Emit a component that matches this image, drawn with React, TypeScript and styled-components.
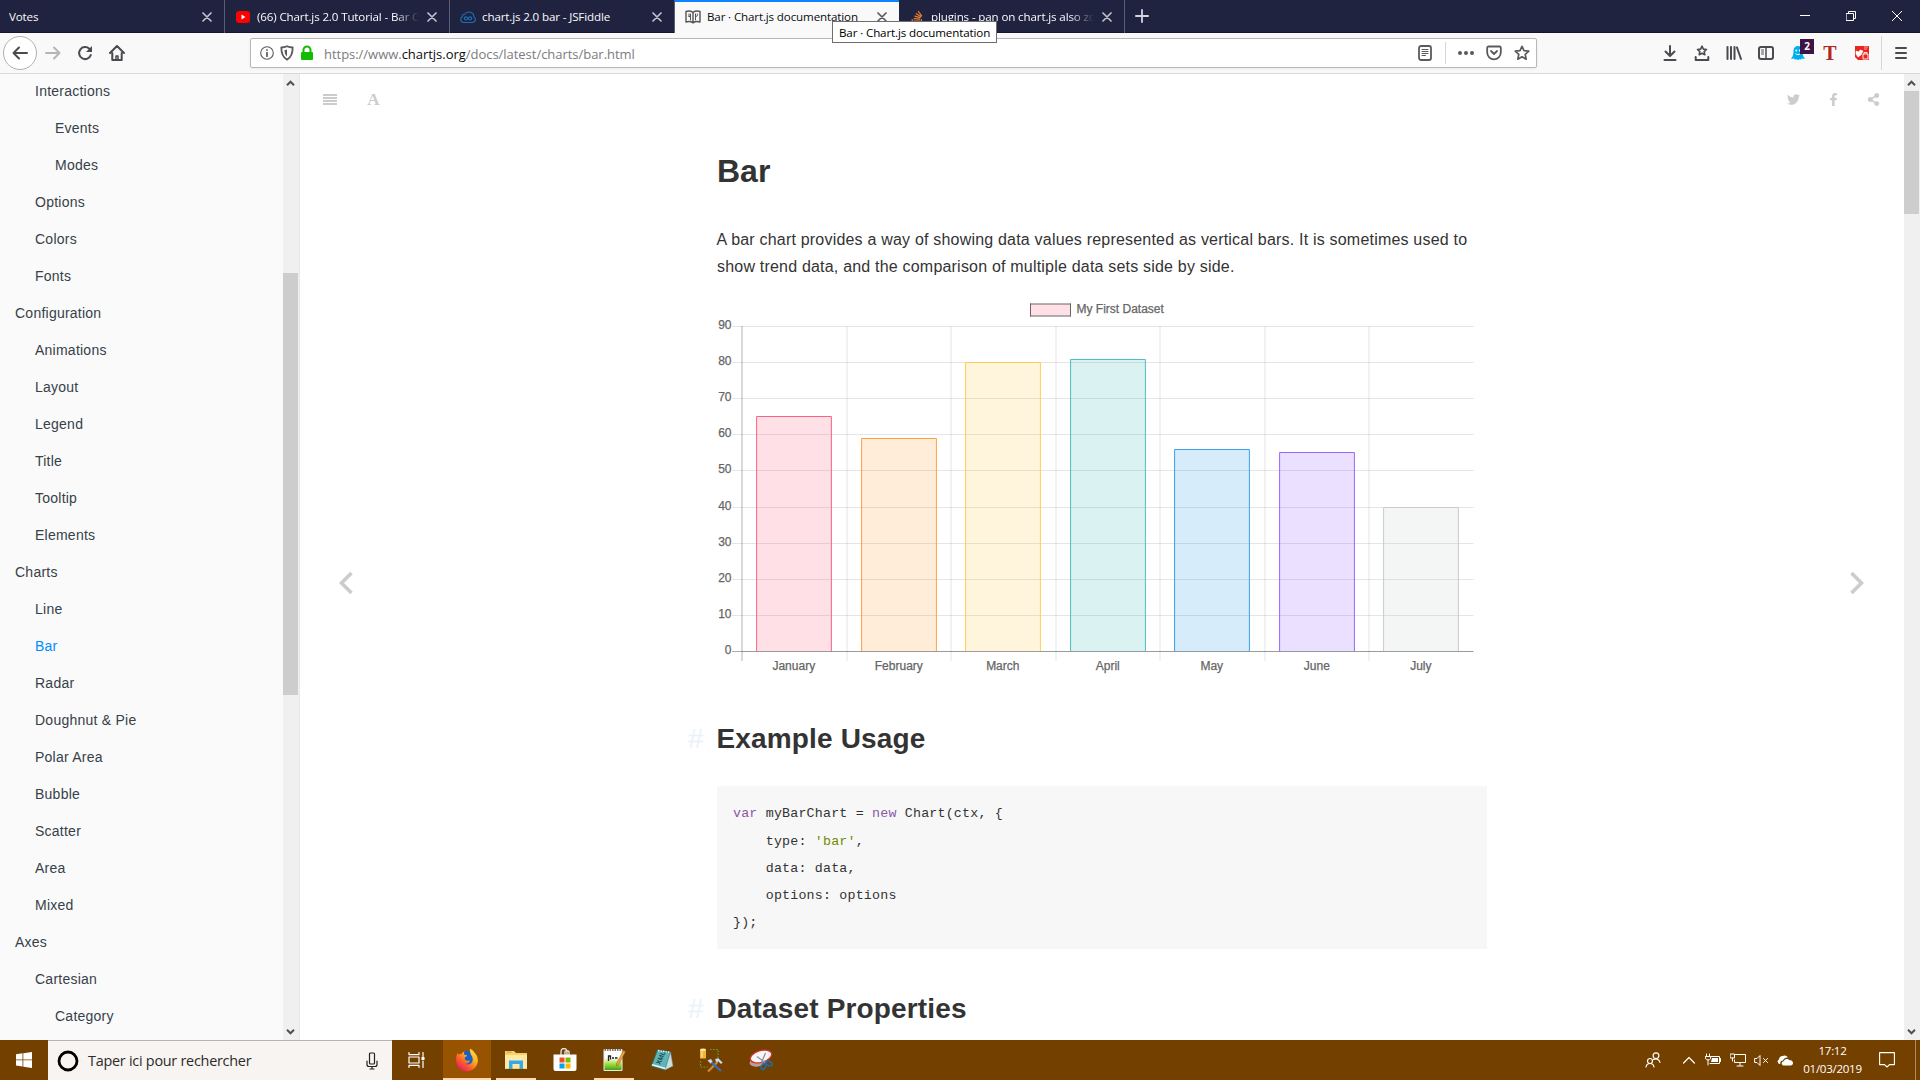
import React from "react";
import styled, { createGlobalStyle, css } from "styled-components";
import { FaTwitter, FaFacebookF, FaShareAlt } from "react-icons/fa";

const ui = `"Open Sans", "Noto Sans", sans-serif`;
const arial = `"Liberation Sans", Arial, sans-serif`;

const GlobalStyle = createGlobalStyle`
  *, *::before, *::after { box-sizing: border-box; }
  html, body { margin: 0; padding: 0; overflow: hidden; background: #fff; }
  svg { display: block; flex: none; }
`;

const Screen = styled.div`
  width: 1920px;
  height: 1080px;
  display: flex;
  flex-direction: column;
  overflow: hidden;
  font-family: ${ui};
`;

/* ---------- tab strip ---------- */
const TabStrip = styled.div`
  flex: none;
  height: 33px;
  display: flex;
  background: #202340;
  border-bottom: 1px solid #14162c;
`;

const Tab = styled.div<{ $active?: boolean }>`
  width: 225px;
  height: 33px;
  flex: none;
  display: flex;
  align-items: center;
  padding: 1px 10px 0 9px;
  color: #f9f9fa;
  border-right: 1px solid #5c5e75;
  ${(p) =>
    p.$active &&
    css`
      width: 224px;
      background: #f9f9fa;
      color: #0c0c0d;
      border-right: 0;
      border-top: 2px solid #0a84ff;
      padding: 0 10px 1px 9px;

      & + & {
        padding-left: 10px;
      }
    `}
`;

const Favicon = styled.span`
  width: 16px;
  margin-right: 6px;
  flex: none;
`;

const TabTitle = styled.span<{ $fade?: boolean }>`
  flex: 1;
  overflow: hidden;
  white-space: nowrap;
  font-size: 11.6px;
  line-height: 18px;
  letter-spacing: -0.14px;
  ${(p) =>
    p.$fade &&
    css`
      mask-image: linear-gradient(to right, #000 calc(100% - 24px), transparent);
    `}
`;

const CloseSlot = styled.span`
  flex: none;
  margin-left: 6px;
  padding: 0 2px;
`;

const NewTab = styled.div`
  width: 33px;
  display: flex;
  align-items: center;
  justify-content: center;
`;

const WindowControls = styled.div`
  margin-left: auto;
  display: flex;
  align-items: center;
`;

const WindowButton = styled.div`
  width: 46px;
  display: flex;
  justify-content: center;
`;

const Tooltip = styled.div`
  position: absolute;
  left: 832px;
  top: 21px;
  width: 165px;
  height: 22px;
  border: 1px solid #6e6e6e;
  background: #fff;
  color: #000;
  font-size: 11.6px;
  line-height: 21px;
  letter-spacing: -0.13px;
  padding-left: 6px;
  white-space: nowrap;
`;

/* ---------- toolbar ---------- */
const Toolbar = styled.div`
  flex: none;
  height: 41px;
  display: flex;
  align-items: center;
  background: #f9f9fa;
  border-bottom: 1px solid #d9d9d9;
`;

const NavGroup = styled.div`
  width: 250px;
  display: flex;
  align-items: center;
  padding-left: 3px;
`;

const BackButton = styled.div`
  width: 34px;
  height: 34px;
  border-radius: 50%;
  border: 1px solid #b1b1b3;
  background: #fff;
  display: flex;
  align-items: center;
  justify-content: center;
`;

const NavButton = styled.div`
  width: 32px;
  display: flex;
  justify-content: center;
`;

const UrlBar = styled.div`
  width: 1287px;
  height: 30px;
  display: flex;
  align-items: center;
  background: #fff;
  border: 1px solid #b8b8b8;
  border-radius: 2px;
  box-shadow: 0 1px 3px rgba(0, 0, 0, 0.06);
  padding-left: 6px;
`;

const UrlText = styled.span`
  flex: 1;
  padding: 1px 0 0 7px;
  font-size: 13px;
  letter-spacing: -0.03px;
  color: #7b7b7e;
  white-space: nowrap;
`;

const UrlHost = styled.span`
  color: #0c0c0d;
`;

const Slot = styled.div<{ $w: number }>`
  width: ${(p) => p.$w}px;
  flex: none;
  display: flex;
  justify-content: center;
  align-items: center;
`;

const VRule = styled.div<{ $h: number }>`
  width: 1px;
  height: ${(p) => p.$h}px;
  background: #d7d7db;
`;

const Extensions = styled.div`
  flex: 1;
  display: flex;
  align-items: center;
  padding-left: 117px;
`;

const GhostWrap = styled.div`
  position: relative;
`;

const Badge = styled.span`
  position: absolute;
  left: 10px;
  top: -6px;
  width: 14px;
  height: 15px;
  background: #3f1444;
  color: #fff;
  font: bold 10px/15px ${ui};
  text-align: center;
`;

const LetterT = styled.span`
  font: bold 20px/20px "Liberation Serif", serif;
  color: #b3261a;
`;

/* ---------- page ---------- */
const Page = styled.div`
  flex: 1;
  min-height: 0;
  display: flex;
  background: #fff;
`;

const Sidebar = styled.nav`
  width: 300px;
  flex: none;
  display: flex;
  background: #fafafa;
  border-right: 1px solid #e7e7e7;
`;

const Summary = styled.ul`
  list-style: none;
  margin: -1px 0 0;
  padding: 0;
  width: 283px;
  flex: none;
`;

const SummaryItem = styled.li<{ $level: number; $active?: boolean }>`
  height: 37px;
  padding-left: ${(p) => 15 + p.$level * 20}px;
  font: 14px/37px ${arial};
  letter-spacing: 0.24px;
  color: ${(p) => (p.$active ? "#008cff" : "#364149")};
`;

const Scrollbar = styled.div`
  width: 16px;
  flex: none;
  background: #f0f0f0;
  display: flex;
  flex-direction: column;
`;

const ScrollArrow = styled.div`
  height: 17px;
  flex: none;
  display: flex;
  align-items: center;
  justify-content: center;
  padding-right: 1px;
`;

const ScrollThumb = styled.div<{ $offset: number; $h: number }>`
  margin-top: ${(p) => p.$offset}px;
  height: ${(p) => p.$h}px;
  width: 15px;
  background: #cdcdcd;
`;

const Spacer = styled.div`
  flex: 1;
`;

const Gap = styled.div<{ $w: number }>`
  flex: none;
  width: ${(p) => p.$w}px;
`;

const Book = styled.main`
  flex: 1;
  min-width: 0;
  display: flex;
  flex-direction: column;
  overflow: hidden;
`;

const BookHeader = styled.header`
  flex: none;
  height: 50px;
  display: flex;
  align-items: center;
  color: #ccc;
  padding: 0 10.5px 0 10px;
`;

const FontGlyph = styled.span`
  font: bold 17px/20px "Liberation Serif", serif;
  padding-top: 1px;
`;

const BookBody = styled.div`
  flex: 1;
  min-height: 0;
  display: flex;
`;

const PageTurn = styled.div<{ $right?: boolean }>`
  width: 91px;
  flex: none;
  display: flex;
  justify-content: center;
  padding: 447px ${(p) => (p.$right ? 3 : 0)}px 0 0;
`;

const ArticleColumn = styled.div`
  flex: 1;
  display: flex;
  justify-content: center;
`;

const Article = styled.article`
  width: 770px;
  font-family: ${arial};
  color: #333;
  letter-spacing: 0.2px;
`;

const H1 = styled.h1`
  margin: 26px 0 0;
  font-size: 32px;
  line-height: 42px;
  letter-spacing: 0;
`;

const Paragraph = styled.p`
  margin: 34px 0 0;
  font-size: 16px;
  line-height: 27.2px;
  text-indent: -0.5px;
`;

const H2 = styled.h2`
  display: flex;
  height: 36px;
  margin: 0 0 0 -29px;
  font-size: 28px;
  line-height: 36px;
  letter-spacing: 0.15px;
`;

const Hash = styled.span`
  width: 28.5px;
  font-weight: 400;
  color: #e9f1fb;
`;

const CodeBlock = styled.pre`
  margin: 29px 0 42px;
  height: 163px;
  background: #f7f7f7;
  padding: 14px 16px;
  font: 13.3px/27.2px "Liberation Mono", monospace;
  letter-spacing: 0.2px;
  color: #333;
`;

const CodeLine = styled.div`
  height: 27.2px;
`;

const Keyword = styled.span`
  color: #8959a8;
`;

const Str = styled.span`
  color: #718c00;
`;

const ChartSvg = styled.svg`
  margin: 10px 0 31px -17px;
  letter-spacing: 0;
  font: 12px ${arial};

  text {
    fill: #666;
    stroke: #666;
    stroke-width: 0.25px;
  }
`;

/* ---------- taskbar ---------- */
const Taskbar = styled.div`
  flex: none;
  height: 40px;
  display: flex;
  background: #744000;
`;

const TaskButton = styled.div<{ $w: number; $active?: boolean; $open?: boolean }>`
  width: ${(p) => p.$w}px;
  height: 40px;
  flex: none;
  display: flex;
  align-items: center;
  justify-content: center;
  background: ${(p) => (p.$active ? "#985300" : "transparent")};
  border-bottom: ${(p) => (p.$active || p.$open ? "2px solid #ffd9b0" : "0")};
  padding-top: ${(p) => (p.$active || p.$open ? "2px" : "0")};
  margin: 0 ${(p) => (p.$open ? 4 : 0)}px;
`;

const SearchBox = styled.div`
  width: 344px;
  flex: none;
  display: flex;
  align-items: center;
  background: #f8f4f1;
  border-top: 1px solid #b9b4b0;
  padding: 0 13px 0 9px;
`;

const SearchText = styled.span`
  flex: 1;
  padding-left: 9px;
  font-size: 14.4px;
  letter-spacing: -0.25px;
  color: #2b2b2b;
  white-space: nowrap;
`;

const Tray = styled.div`
  margin-left: auto;
  display: flex;
  align-items: center;
`;

const Clock = styled.div`
  width: 61px;
  text-align: center;
  color: #fff;
  font-size: 11.6px;
  line-height: 18px;
  letter-spacing: -0.3px;
  white-space: nowrap;
`;

const ShowDesktop = styled.div`
  width: 5px;
  height: 40px;
  margin-left: 5px;
  border-left: 1px solid #ad8b63;
`;

/* ---------- icons ---------- */
type StrokeProps = { w?: number; h?: number; box: string; color?: string; sw?: number; children: React.ReactNode };
const Line = ({ w = 16, h = 16, box, color = "#4a4a4f", sw = 2, children }: StrokeProps) => (
  <svg width={w} height={h} viewBox={box} fill="none" stroke={color} strokeWidth={sw} strokeLinecap="round" strokeLinejoin="round">
    {children}
  </svg>
);

const Cross = ({ color = "#c0c0ca" }: { color?: string }) => (
  <Line w={10} h={10} box="0 0 10 10" color={color} sw={1.7}><path d="M1 1l8 8M9 1L1 9" /></Line>
);

const YouTubeIcon = () => (
  <svg width="16" height="16" viewBox="0 0 16 16"><rect x="1" y="2" width="14" height="12" rx="3" fill="#f00" /><path d="M6.500 5.500v5l4-2.500z" fill="#fff" /></svg>
);
const FiddleIcon = () => (
  <Line box="0 0 16 16" color="#1f6fb8" sw={1.1}>
    <path d="M4 13.500h8.500a3 3 0 0 0 1.400-5.600A5 5 0 0 0 4.700 5.300 2 2 0 0 0 2.300 7.700 3.100 3.100 0 0 0 4 13.500z" />
    <path d="M8 9.500c-.8-1.200-1.400-1.600-2.100-1.600a1.500 1.500 0 0 0 0 3.100c1.700 0 2.500-3.100 4.200-3.100a1.500 1.500 0 0 1 0 3.100c-.7 0-1.300-.4-2.100-1.500z" />
  </Line>
);
const BookIcon = () => (
  <Line box="0 0 16 16" color="#555" sw={1.4}>
    <path d="M1 2.500c2.500-.8 5-.5 7 .8 2-1.300 4.500-1.600 7-.8v10.500c-2.500-.8-5-.5-7 .8-2-1.300-4.500-1.600-7-.8zM8 3.500v10" />
    <path d="M4 5v2.500M5.500 5v6M4 7.500h1.500M10.500 5v6M12.300 5c.3 1.600-.2 2.600-1.800 3" strokeWidth="1" />
  </Line>
);
const StackIcon = () => (
  <Line box="0 0 16 16" color="#f48024" sw={1.2}>
    <path d="M5 12h5.500M5.200 9.700l5.500.5M5.900 7.200l5.200 1.500M7.300 4.700l4.500 2.900M9.400 2.500l3.200 4.300" /><path d="M3.200 10.500V14h9.200v-3.500" stroke="#9a9ba6" />
  </Line>
);

const ScrollChevron = ({ down }: { down?: boolean }) => (
  <svg width="9" height="6" viewBox="0 0 9 6"><path d={down ? "M1 .8l3.500 3.500L8 .8" : "M1 5.200l3.500-3.500L8 5.200"} fill="none" stroke="#505050" strokeWidth="2" /></svg>
);

const AlignIcon = () => (
  <svg width="14" height="11" viewBox="0 0 14 11" fill="#ccc"><path d="M0 0h14v2H0zM0 3h14v2H0zM0 6h14v2H0zM0 9h14v2H0z" /></svg>
);

const Angle = ({ right }: { right?: boolean }) => (
  <svg width="14" height="24" viewBox="0 0 14 24" fill="none" stroke="#ccc" strokeWidth="3.600">
    <path d={right ? "M1.500 2L11.500 12 1.500 22" : "M12.500 2L2.500 12l10 10"} />
  </svg>
);

const FirefoxIcon = () => (
  <svg width="24" height="24" viewBox="0 0 24 24">
    <defs>
      <linearGradient id="fox" x1="1" y1="0" x2="0.200" y2="1"><stop offset="0" stopColor="#fff04a" /><stop offset=".4" stopColor="#ffb01f" /><stop offset=".7" stopColor="#ff5a2b" /><stop offset="1" stopColor="#e5156e" /></linearGradient>
    </defs>
    <circle cx="12.500" cy="11.500" r="8.500" fill="#1360cf" />
    <path d="M3 4.500c0 1 .2 1.700.6 2.300C4.500 5.900 5.500 5.600 6.500 5.700c1-1.300 2-2 3-2.200-.6 1-.7 2-.3 3 1 .5 2 .6 3 .7-.3 1.200-1.400 1.600-2.300 2.200-.3 1-.3 1.800.5 2.700 1.300 1.200 3.200.7 4.600.1-.4 2.300-2.500 3.700-5 3.500 3 1.600 6.600.5 7.500-2.700.8-3.200-.8-5-1.600-6.400C15 4.300 14.500 2.200 15.200.8c2.500 1 3.500 3 5 4.800 4 4.600 3.300 11-1 14.800C14.500 24.300 7.500 24 3.800 19.800.300 15.800.200 9 3 4.500z" fill="url(#fox)" />
  </svg>
);
const ExplorerIcon = () => (
  <svg width="22" height="20" viewBox="0 0 22 20"><path d="M0 1h9l2 2h11v16H0z" fill="#f6d26b" /><path d="M0 5h22v13H0z" fill="#ffe9a6" /><path d="M4 19v-8.500h14V19h-3.500v-5h-7v5z" fill="#35a9ea" /><path d="M1.500 1.500h5v1.300h-5z" fill="#e8a33d" /></svg>
);
const StoreIcon = () => (
  <svg width="24" height="24" viewBox="0 0 24 24"><path d="M8 7V3.500a3 3 0 0 1 6 0V7M12 7V3.500a3 3 0 0 1 4 0V7" fill="none" stroke="#e6e6e6" strokeWidth="1.300" /><path d="M.5 6.500h23V21a2 2 0 0 1-2 2h-19a2 2 0 0 1-2-2z" fill="#fff" /><path d="M6.500 9.500h5v5h-5z" fill="#f25022" /><path d="M12.500 9.500h5v5h-5z" fill="#7fba00" /><path d="M6.500 15.500h5v5h-5z" fill="#00a4ef" /><path d="M12.500 15.500h5v5h-5z" fill="#ffb900" /></svg>
);
const NotepadIcon = () => (
  <svg width="24" height="24" viewBox="0 0 24 24"><defs><linearGradient id="npp" x1="0" y1="0" x2="0" y2="1"><stop offset=".4" stopColor="#fff" /><stop offset=".7" stopColor="#9fdc3c" /><stop offset="1" stopColor="#3a9b12" /></linearGradient></defs><path d="M2 1.500h18v21H2z" fill="url(#npp)" stroke="#e9e9e9" /><path d="M2.500 2h17" stroke="#777" strokeWidth="2" strokeDasharray="1.500 1" /><path d="M6.500 13V8h2v3.500M10 10h2M13 10h2.500" stroke="#222" strokeWidth="1.300" fill="none" /><path d="M14.500 15.500l7-13 2 1.200-7 13-2.200 1.300z" fill="#f1a43a" stroke="#8a5a1c" strokeWidth=".5" /></svg>
);
const XmlIcon = () => (
  <svg width="24" height="24" viewBox="0 0 24 24"><path d="M7.500 2l13 2L15 22 1.500 18z" fill="#5fb4b6" stroke="#2f7377" strokeWidth=".8" /><path d="M20.500 4L23 18l-8 4z" fill="#c9dfe0" stroke="#6a8e90" strokeWidth=".5" /><path d="M2 16.800l13.500 3.700" stroke="#e9f5f5" strokeWidth="1.500" /><path d="M8 2.500l12 1.800" stroke="#dff" strokeWidth="1.300" strokeDasharray="1.500 1" /><text x="0" y="0" transform="translate(10 17) rotate(-66)" fontSize="6.500" fontWeight="bold" fill="#12464a" fontFamily="Liberation Sans, sans-serif">XML</text></svg>
);
const ToolsIcon = () => (
  <svg width="24" height="24" viewBox="0 0 24 24"><path d="M1 1.500h6v9H1z" fill="#f2b632" /><ellipse cx="4" cy="1.700" rx="3" ry="1.300" fill="#ffe7a0" /><path d="M3 2.500v7" stroke="#ffeab0" /><path d="M11 1.500h8v8M1.500 13v6h7" fill="none" stroke="#58a83a" strokeWidth="1.200" strokeDasharray="1.500 1.500" /><path d="M9 23.500l9.500-9.500" stroke="#c98a3a" strokeWidth="2.200" /><path d="M12 14l10 9" stroke="#3b6fb5" strokeWidth="2.200" /><path d="M8.500 12.500l3 3 2-2-1.500-2.500M16 11.500l3-1.500 4.500 4.500-1.500 1.500-2.500-2.500-2 1z" fill="#d5dbe3" stroke="#8993a1" strokeWidth=".6" /></svg>
);
const SnipIcon = () => (
  <svg width="24" height="24" viewBox="0 0 24 24"><ellipse cx="9" cy="13.500" rx="8.500" ry="4.800" fill="#b8a09a" transform="rotate(-15 9 13.500)" /><ellipse cx="12" cy="8.500" rx="11" ry="5.800" fill="#f7f7f8" stroke="#d8332f" strokeWidth="1.300" transform="rotate(-17 12 8.500)" /><path d="M8 8.500l8 6M16.500 5l-4 9.500" stroke="#8d939b" strokeWidth="1.300" /><ellipse cx="14.500" cy="18.500" rx="2" ry="3.200" transform="rotate(25 14.500 18.500)" fill="none" stroke="#1a6fb5" strokeWidth="1.500" /><ellipse cx="20" cy="15.500" rx="2" ry="3.200" transform="rotate(-60 20 15.500)" fill="none" stroke="#1a6fb5" strokeWidth="1.500" /></svg>
);

/* ---------- chart ---------- */
const ORIGIN = { x: 700, y: 290 };
const BASE = 651.5;
const STEP = 104.5;
const UNIT = 325 / 90;
const GRID_Y = [651.5, 615.5, 579.5, 543.5, 507.5, 470.5, 434.5, 398.5, 362.5, 326.5];
const SERIES = [
  { label: "January", value: 65, rgb: "255,99,132" },
  { label: "February", value: 59, rgb: "255,159,64" },
  { label: "March", value: 80, rgb: "255,205,86" },
  { label: "April", value: 81, rgb: "75,192,192" },
  { label: "May", value: 56, rgb: "54,162,235" },
  { label: "June", value: 55, rgb: "153,102,255" },
  { label: "July", value: 40, rgb: "201,203,207" },
];

const BarChart = () => (
  <ChartSvg width="800" height="400" viewBox={`${ORIGIN.x} ${ORIGIN.y} 800 400`}>
    <rect x="1030.500" y="304" width="40" height="12" fill="#ffe0e6" />
    <path d="M1030 304h41M1030 316h41" stroke="#666" strokeOpacity=".5" strokeWidth="2" />
    <path d="M1030.500 303.500v13M1070.500 303.500v13" stroke="#666" />
    <text x="1076.500" y="313">My First Dataset</text>
    {GRID_Y.map((y, i) => (
      <g key={y}>
        <path d={`M732 ${y}H1473.500`} stroke={i === 0 ? "rgba(0,0,0,.32)" : "rgba(0,0,0,.1)"} />
        <text x="731.500" y={y + 2.5} textAnchor="end">{i * 10}</text>
      </g>
    ))}
    {SERIES.map((s, i) => {
      const x = Math.round(742 + i * STEP);
      const left = x + 14.3;
      const top = Math.floor(BASE - s.value * UNIT) + 0.5;
      return (
        <g key={s.label}>
          <path d={`M${x} 326V661`} stroke={i === 0 ? "rgba(0,0,0,.3)" : "rgba(0,0,0,.1)"} />
          <rect x={left} y={top} width="75.200" height={BASE - top} fill={`rgba(${s.rgb},.2)`} />
          <path d={`M${left + 0.3} 651V${top}H${left + 75.1}V651`} fill="none" stroke={`rgb(${s.rgb})`} />
          <text x={x + 51.8} y="670" textAnchor="middle">{s.label}</text>
        </g>
      );
    })}
    <path d="M742 651.500H1473.500" stroke="rgba(0,0,0,.1)" />
  </ChartSvg>
);

const SUMMARY: [string, number][] = [
  ["Interactions", 1], ["Events", 2], ["Modes", 2], ["Options", 1], ["Colors", 1], ["Fonts", 1],
  ["Configuration", 0], ["Animations", 1], ["Layout", 1], ["Legend", 1], ["Title", 1], ["Tooltip", 1], ["Elements", 1],
  ["Charts", 0], ["Line", 1], ["Bar", 1], ["Radar", 1], ["Doughnut & Pie", 1], ["Polar Area", 1], ["Bubble", 1],
  ["Scatter", 1], ["Area", 1], ["Mixed", 1], ["Axes", 0], ["Cartesian", 1], ["Category", 2],
];

export default function App() {
  return (
    <Screen>
      <GlobalStyle />
      <TabStrip>
        <Tab><TabTitle>Votes</TabTitle><CloseSlot><Cross /></CloseSlot></Tab>
        <Tab><Favicon><YouTubeIcon /></Favicon><TabTitle $fade>(66) Chart.js 2.0 Tutorial - Bar C</TabTitle><CloseSlot><Cross /></CloseSlot></Tab>
        <Tab><Favicon><FiddleIcon /></Favicon><TabTitle>chart.js 2.0 bar - JSFiddle</TabTitle><CloseSlot><Cross /></CloseSlot></Tab>
        <Tab $active><Favicon><BookIcon /></Favicon><TabTitle>Bar · Chart.js documentation</TabTitle><CloseSlot><Cross color="#5a5a5e" /></CloseSlot></Tab>
        <Gap $w={1} />
        <Tab><Favicon><StackIcon /></Favicon><TabTitle $fade>plugins - pan on chart.js also zo</TabTitle><CloseSlot><Cross /></CloseSlot></Tab>
        <NewTab><Line w={14} h={14} box="0 0 14 14" color="#d5d5dc" sw={1.8}><path d="M7 .9v12.200M.9 7h12.200" /></Line></NewTab>
        <WindowControls>
          <WindowButton><Line w={10} h={10} box="0 0 10 10" color="#fff" sw={1}><path d="M0 4.500h10" /></Line></WindowButton>
          <WindowButton><Line w={10} h={10} box="0 0 10 10" color="#fff" sw={1}><path d="M.5 2.500h7v7h-7zM2.500 2.500v-2h7v7h-2" /></Line></WindowButton>
          <WindowButton><Line w={10} h={10} box="0 0 10 10" color="#fff" sw={1}><path d="M0 0l10 10M10 0L0 10" /></Line></WindowButton>
        </WindowControls>
      </TabStrip>
      <Tooltip>Bar · Chart.js documentation</Tooltip>

      <Toolbar>
        <NavGroup>
          <BackButton><Line box="0 0 16 16"><path d="M15 8H1.500M7 2.500L1.500 8 7 13.500" /></Line></BackButton>
          <NavButton><Line box="0 0 16 16" color="#b5b5b8"><path d="M1 8h13.500M9 2.500L14.500 8 9 13.500" /></Line></NavButton>
          <NavButton><Line box="0 0 16 16"><path d="M13.800 10a6 6 0 1 1-1.500-6.200L14 5.500" /><path d="M15 1v6H9z" fill="#4a4a4f" stroke="none" /></Line></NavButton>
          <NavButton><Line box="0 0 16 16"><path d="M1 8l7-7 7 7M3.300 8v7h9.400V8" /><path d="M7 15v-4h2v4" strokeWidth="1.500" /></Line></NavButton>
        </NavGroup>
        <UrlBar>
          <Slot $w={20}><Line w={14} h={14} box="0 0 14 14" color="#5a5a5e" sw={1.1}><circle cx="7" cy="7" r="6.300" /><path d="M7 6.500v3.700M7 3.900v.2" strokeWidth="1.700" /></Line></Slot>
          <Slot $w={20}><Line w={14} h={16} box="0 0 14 16" color="#5a5a5e" sw={1.8}><path d="M7 1.200c2 .9 3.800 1.200 5.700 1.300 0 5.500-1 9.500-5.700 12.200C2.300 12 1.300 8 1.300 2.500 3.200 2.400 5 2.100 7 1.200z" /><path d="M7 4.500v7C5.200 10 4.600 8 4.500 5.200z" fill="#5a5a5e" stroke="none" /></Line></Slot>
          <Slot $w={20}><svg width="14" height="16" viewBox="0 0 14 16"><path d="M3.500 8V5a3.500 3.500 0 0 1 7 0v3" fill="none" stroke="#12bc00" strokeWidth="2" /><rect x="1" y="7" width="12" height="8" rx="1" fill="#12bc00" /></svg></Slot>
          <UrlText>https://www.<UrlHost>chartjs.org</UrlHost>/docs/latest/charts/bar.html</UrlText>
          <Slot $w={28}><Line w={14} h={16} box="0 0 14 16" color="#5a5a5e" sw={1.8}><rect x="1" y="1" width="12" height="14" rx="2" /><path d="M4 4.500h6M4 6.500h6M4 8.500h6M4 10.500h3.500" strokeWidth="1" /></Line></Slot>
          <Slot $w={13}><VRule $h={22} /></Slot>
          <Slot $w={28}><svg width="16" height="16" viewBox="0 0 16 16" fill="#5a5a5e"><circle cx="2" cy="8" r="2" /><circle cx="8" cy="8" r="2" /><circle cx="14" cy="8" r="2" /></svg></Slot>
          <Slot $w={28}><Line box="0 0 16 16" color="#5a5a5e" sw={1.8}><path d="M2.500 1.500h11a1.300 1.300 0 0 1 1.300 1.300V7.500a6.800 6.800 0 0 1-13.600 0V2.800a1.300 1.300 0 0 1 1.300-1.300z" /><path d="M5 6l3 3 3-3" /></Line></Slot>
          <Slot $w={28}><Line box="0 0 16 16" color="#5a5a5e" sw={1.7}><path d="M8 1.300l2 4.400 4.800.5-3.600 3.200 1 4.800L8 11.800l-4.200 2.400 1-4.800L1.200 6.200 6 5.700z" /></Line></Slot>
        </UrlBar>
        <Extensions>
          <Slot $w={32}><Line box="0 0 16 16"><path d="M8 1v9.500M3.500 6.500L8 11l4.500-4.500M2.500 15h11" /></Line></Slot>
          <Slot $w={32}><Line box="0 0 16 16" sw={1.6}><path d="M8 1.200l1.400 2.900 3.100.4-2.300 2.100.6 3.100L8 8.200 5.200 9.700l.6-3.100-2.300-2.100 3.100-.4z" /><path d="M1.700 12v3h12.600v-3" strokeWidth="2" /></Line></Slot>
          <Slot $w={32}><Line box="0 0 16 16"><path d="M1.500 2v12M5 2v12M8.500 2v12M11 2.500l4 11.500" /></Line></Slot>
          <Slot $w={32}><Line box="0 0 16 16"><rect x="1" y="2" width="14" height="12" rx="2" /><path d="M8 2v12" strokeWidth="1.500" /><path d="M3.500 5h2M3.500 7h2M3.500 9h2" strokeWidth="1" /></Line></Slot>
          <Slot $w={32}>
            <GhostWrap>
              <svg width="16" height="16" viewBox="0 0 16 16"><path d="M8 1a4.500 4.500 0 0 0-4.500 4.500c0 4-.5 6-2.500 8 1.300.5 2 .3 2.800-.3.600 1.300 1.500 1.800 2.400.8.800 1.300 2.600 1.300 3.500 0 .9 1 1.800.6 2.400-.8.800.6 1.500.8 2.900.3-2-2-2.500-4-2.500-8A4.500 4.500 0 0 0 8 1z" fill="#00aef0" /><circle cx="6.300" cy="5.500" r="1" fill="#fff" /><circle cx="9.800" cy="5.500" r="1" fill="#fff" /><path d="M5.500 8.500c1.500 1.500 3.500 1.500 5 0" stroke="#fff" fill="none" /></svg>
              <Badge>2</Badge>
            </GhostWrap>
          </Slot>
          <Slot $w={32}><LetterT>T</LetterT></Slot>
          <Slot $w={32}><svg width="14" height="16" viewBox="0 0 14 16"><path d="M0 1h14v14H3L0 12z" fill="#e8261f" /><path d="M1 6l3 1 1-2 3 1-2 4-3 2-2-3zM9 2h4M9 4h3" fill="#fff" stroke="#fff" strokeWidth=".6" /><path d="M8 9h5v5H8zM9 9V7.500h3V9" fill="#e8261f" stroke="#fff" strokeWidth=".9" /></svg></Slot>
          <Slot $w={6}><VRule $h={34} /></Slot>
          <Slot $w={34}><Line box="0 0 16 16"><path d="M3 3h10M3 8h10M3 13h10" /></Line></Slot>
        </Extensions>
      </Toolbar>

      <Page>
        <Sidebar>
          <Summary>
            {SUMMARY.map(([name, level]) => (
              <SummaryItem key={name} $level={level} $active={name === "Bar"}>{name}</SummaryItem>
            ))}
          </Summary>
          <Scrollbar>
            <ScrollArrow><ScrollChevron /></ScrollArrow>
            <ScrollThumb $offset={182} $h={422} />
            <Spacer />
            <ScrollArrow><ScrollChevron down /></ScrollArrow>
          </Scrollbar>
        </Sidebar>

        <Book>
          <BookHeader>
            <Slot $w={40}><AlignIcon /></Slot>
            <Slot $w={47}><FontGlyph>A</FontGlyph></Slot>
            <Spacer />
            <Slot $w={41}><FaTwitter size={13} /></Slot>
            <Slot $w={40}><FaFacebookF size={13} /></Slot>
            <Slot $w={40}><FaShareAlt size={13} /></Slot>
          </BookHeader>
          <BookBody>
            <PageTurn><Angle /></PageTurn>
            <ArticleColumn>
              <Article>
                <H1>Bar</H1>
                <Paragraph>A bar chart provides a way of showing data values represented as vertical bars. It is sometimes used to show trend data, and the comparison of multiple data sets side by side.</Paragraph>
                <BarChart />
                <H2><Hash>#</Hash>Example Usage</H2>
                <CodeBlock>
                  <CodeLine><Keyword>var</Keyword>{" myBarChart = "}<Keyword>new</Keyword>{" Chart(ctx, {"}</CodeLine>
                  <CodeLine>{"    type: "}<Str>'bar'</Str>,</CodeLine>
                  <CodeLine>{"    data: data,"}</CodeLine>
                  <CodeLine>{"    options: options"}</CodeLine>
                  <CodeLine>{"});"}</CodeLine>
                </CodeBlock>
                <H2><Hash>#</Hash>Dataset Properties</H2>
              </Article>
            </ArticleColumn>
            <PageTurn $right><Angle right /></PageTurn>
          </BookBody>
        </Book>

        <Scrollbar>
          <ScrollArrow><ScrollChevron /></ScrollArrow>
          <ScrollThumb $offset={0} $h={123} />
          <Spacer />
          <ScrollArrow><ScrollChevron down /></ScrollArrow>
        </Scrollbar>
      </Page>

      <Taskbar>
        <TaskButton $w={48}><svg width="16" height="16" viewBox="0 0 16 16" fill="#fff"><path d="M0 2.200l6.500-.9v6.200H0zM7.300 1.200L16 0v7.500H7.300zM0 8.300h6.500v6.200L0 13.600zM7.300 8.300H16V16l-8.700-1.200z" /></svg></TaskButton>
        <SearchBox>
          <svg width="22" height="22" viewBox="0 0 22 22"><circle cx="11" cy="11" r="9" fill="none" stroke="#000" strokeWidth="2.800" /></svg>
          <SearchText>Taper ici pour rechercher</SearchText>
          <Line w={14} h={18} box="0 0 14 18" color="#222" sw={1.2}><rect x="4.500" y="1" width="5" height="11" rx="1" /><path d="M2 9v3.500a2 2 0 0 0 2 2h6a2 2 0 0 0 2-2V9M7 14.500V17M5 17h4" /></Line>
        </SearchBox>
        <TaskButton $w={49}><Line w={18} h={16} box="0 0 18 16" color="#fff" sw={1.2}><path d="M1 .5v2.200h10V.5M1 15.500v-2.200h10v2.200M1 5h10v6H1zM15 .5v4M15 9v6.500" /><path d="M13.500 5h3v3h-3z" fill="#fff" stroke="none" /></Line></TaskButton>
        <Gap $w={2} />
        <TaskButton $w={48} $active><FirefoxIcon /></TaskButton>
        <Gap $w={1} />
        <TaskButton $w={40} $open><ExplorerIcon /></TaskButton>
        <TaskButton $w={50}><StoreIcon /></TaskButton>
        <TaskButton $w={40} $open><NotepadIcon /></TaskButton>
        <TaskButton $w={48}><XmlIcon /></TaskButton>
        <TaskButton $w={50}><ToolsIcon /></TaskButton>
        <TaskButton $w={49}><SnipIcon /></TaskButton>
        <Tray>
          <Slot $w={40}><Line w={16} h={16} box="0 0 16 16" color="#fff" sw={1.2}><circle cx="11" cy="3.700" r="2.900" /><circle cx="5" cy="9" r="2.500" /><path d="M1 15c.3-2 1.800-3.500 4-3.500S8.700 13 9 15M8.500 7.500c2-1.500 5.800-.5 6.500 3" /></Line></Slot>
          <Slot $w={32}><Line w={12} h={8} box="0 0 12 8" color="#fff" sw={1.2}><path d="M.6 7L6 1.500 11.400 7" /></Line></Slot>
          <Slot $w={16}><Line w={16} h={14} box="0 0 16 14" color="#fff" sw={1}><path d="M6 3.500h8.500v7H5M15.500 5.500v3M1.500 1v2M4.500 1v2M.5 3.500h5v2c0 2-5 2-5 0zM3 7v5" /><path d="M7 5h6v4H6z" fill="#fff" stroke="none" /></Line></Slot>
          <Slot $w={33}><Line w={16} h={14} box="0 0 16 14" color="#fff" sw={1}><path d="M5.500 1.500h10v8h-11V7M10 9.500v3M7 13h6M.5 1h4v4h-4zM2.500 5v3" /></Line></Slot>
          <Slot $w={14}><Line w={15} h={13} box="0 0 15 13" color="#fff" sw={1}><path d="M1 4.500h2l3-3v10l-3-3H1zM9.500 4.500l4 4M13.500 4.500l-4 4" /></Line></Slot>
          <Slot $w={34}><svg width="16" height="11" viewBox="0 0 16 11"><path d="M2.500 9A2.400 2.400 0 0 1 2 4.500 3.800 3.800 0 0 1 5.500 1a4.500 4.500 0 0 1 5.500 1.500C8.500 2 6.500 3.500 6 5.500 4 5.500 3 7 3.200 9z" fill="#fff" /><path d="M6 10.500A2.200 2.200 0 0 1 6.700 6.300 3.300 3.300 0 0 1 12.500 5.300 2.700 2.700 0 0 1 14 10.500z" fill="#fff" /></svg></Slot>
          <Clock>17:12<br />01/03/2019</Clock>
          <Slot $w={47}><Line w={16} h={16} box="0 0 16 16" color="#fff" sw={1.1}><path d="M.6.6h14.800v12H10.500L8 15l-2.500-2.400H.6z" /></Line></Slot>
          <ShowDesktop />
        </Tray>
      </Taskbar>
    </Screen>
  );
}
